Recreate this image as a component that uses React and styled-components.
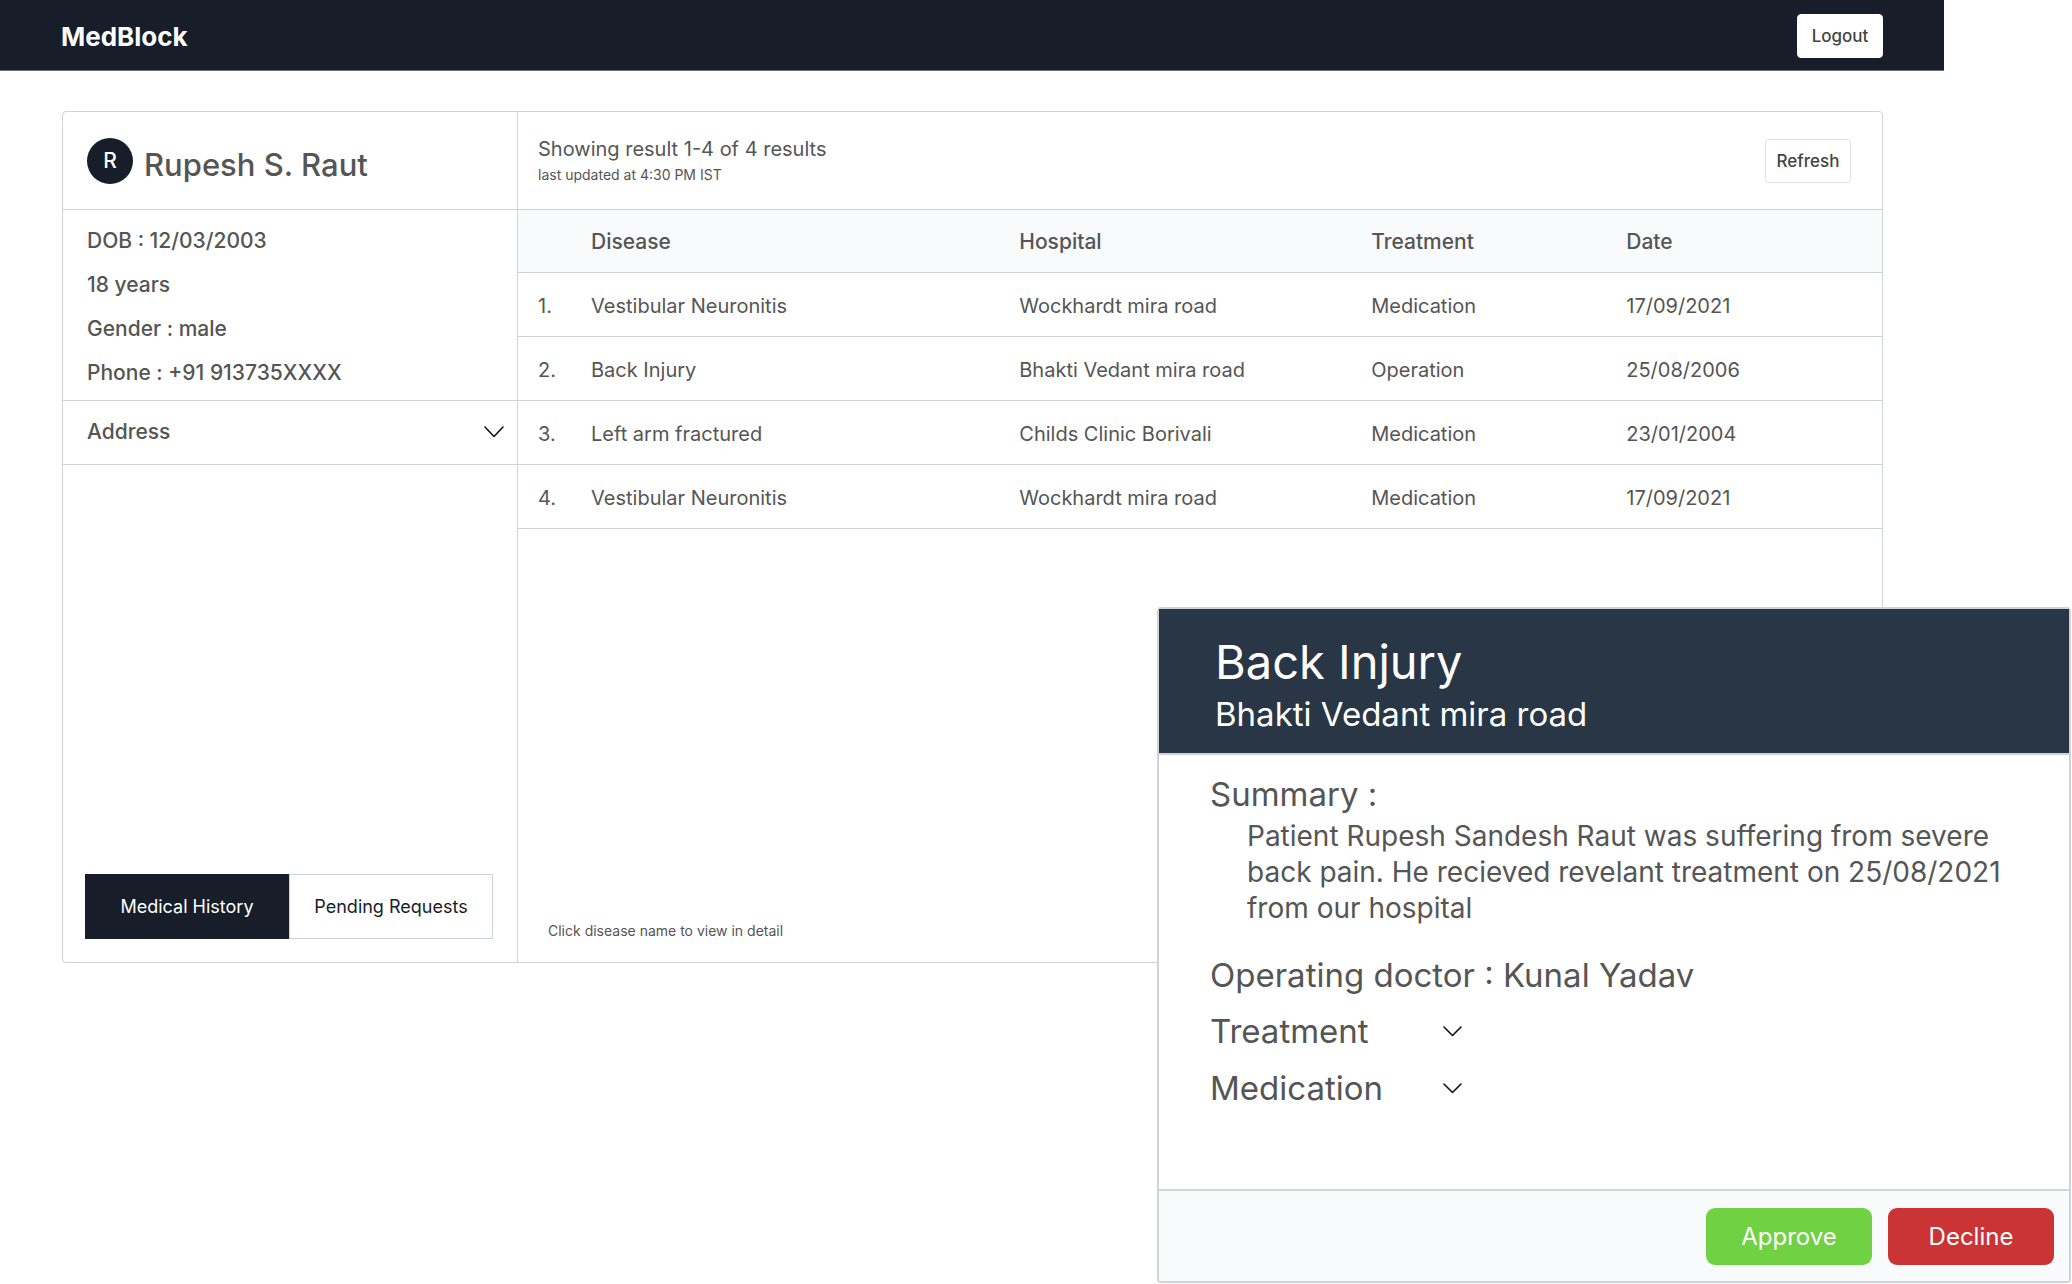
import React, { useState } from "react";
import styled, { createGlobalStyle } from "styled-components";

const color = {
  navy: "#171e29",
  slate: "#283646",
  text: "#555555",
  line: "#cfd3d7",
  tint: "#f9fafc",
};

const GlobalStyle = createGlobalStyle`
  *, *::before, *::after { box-sizing: border-box; }
  body {
    margin: 0;
    background: #ffffff;
    color: ${color.text};
    font-family: Inter, "Liberation Sans", sans-serif;
    font-size: 20px;
  }
  h1, h2, h3, p, ul { margin: 0; padding: 0; font-weight: 400; }
  button { font-family: inherit; color: inherit; cursor: pointer; }
`;

const Page = styled.div`
  position: relative;
  min-height: 100vh;
  display: flex;
  flex-direction: column;
  padding: 0 128px 321px 0;
`;

const TopBar = styled.header`
  display: flex;
  align-items: center;
  justify-content: space-between;
  height: 71px;
  padding: 2px 61px 0;
  background: ${color.navy};
  border-bottom: 1px solid #6d727b;
`;

const Brand = styled.h1`
  color: #ffffff;
  font-size: 26px;
  font-weight: 700;
`;

const SmallButton = styled.button`
  width: 86px;
  height: 44px;
  padding: 0;
  background: #ffffff;
  border: 1px solid ${(p) => (p.$outlined ? "#dfe1e4" : "#ffffff")};
  border-radius: 4px;
  color: #444444;
  font-size: 17px;
  font-weight: 500;
`;

const Card = styled.main`
  flex: 1;
  display: grid;
  grid-template-columns: 455px 1fr;
  margin: 40px 61px 0 62px;
  border: 1px solid ${color.line};
  border-radius: 4px;
`;

const Sidebar = styled.aside`
  display: flex;
  flex-direction: column;
  border-right: 1px solid ${color.line};
`;

const PanelHead = styled.div`
  display: flex;
  align-items: center;
  height: 98px;
  border-bottom: 1px solid ${color.line};
`;

const Identity = styled(PanelHead)`
  gap: 11px;
  padding-left: 24px;
`;

const Avatar = styled.span`
  display: grid;
  place-items: center;
  width: 46px;
  height: 46px;
  border-radius: 50%;
  background: ${color.navy};
  color: #ffffff;
  font-size: 21px;
  font-weight: 500;
`;

const PatientName = styled.h2`
  padding-top: 8px;
  font-size: 31px;
  font-weight: 500;
`;

const Facts = styled.ul`
  display: flex;
  flex-direction: column;
  height: 191px;
  padding: 9px 24px 0;
  border-bottom: 1px solid ${color.line};
  list-style: none;
  font-size: 21px;
  font-weight: 500;
  line-height: 44px;
`;

const AddressToggle = styled.button`
  display: flex;
  align-items: center;
  justify-content: space-between;
  height: 64px;
  padding: 0 13px 2px 24px;
  background: none;
  border: 0;
  border-bottom: 1px solid ${color.line};
  font-size: 21px;
  font-weight: 500;
`;

const Tabs = styled.div`
  display: grid;
  grid-template-columns: 1fr 1fr;
  margin: auto 24px 23px 22px;
`;

const Tab = styled.button`
  height: 65px;
  padding: 0;
  background: ${(p) => (p.$active ? color.navy : "#ffffff")};
  border: 1px solid ${(p) => (p.$active ? color.navy : color.line)};
  color: ${(p) => (p.$active ? "#ffffff" : color.navy)};
  font-size: 18px;
`;

const Results = styled.section`
  display: flex;
  flex-direction: column;
`;

const ResultsHead = styled(PanelHead)`
  justify-content: space-between;
  padding: 0 31px 0 20px;
`;

const ResultCount = styled.p`
  font-size: 20px;
  line-height: 28px;
`;

const Note = styled.p`
  font-size: 14px;
  line-height: 24px;
`;

const Hint = styled(Note)`
  margin: auto 0 19px 30px;
`;

const HistoryTable = styled.table`
  width: 100%;
  table-layout: fixed;
  border-collapse: separate;
  border-spacing: 0;
  text-align: left;
`;

const Col = styled.col`
  width: ${(p) => p.$width};
`;

const HeadCell = styled.th`
  height: 63px;
  padding: 0;
  background: ${color.tint};
  border-bottom: 1px solid ${color.line};
  font-size: 21px;
  font-weight: 500;
`;

const Cell = styled.td`
  height: 64px;
  padding: 2px 0 0 ${(p) => (p.$index ? "20px" : "0")};
  border-bottom: 1px solid ${color.line};
  font-size: 20px;
`;

const DiseaseLink = styled.button`
  padding: 0;
  background: none;
  border: 0;
  font-size: 20px;
`;

const Dialog = styled.section`
  position: absolute;
  right: 1px;
  bottom: 1px;
  width: min(914px, 100%);
  background: #ffffff;
  border: 2px solid ${color.line};
  border-radius: 4px;
`;

const DialogHead = styled.header`
  padding: 23px 56px 17px;
  background: ${color.slate};
  border-bottom: 2px solid ${color.line};
  color: #ffffff;
`;

const DialogTitle = styled.h2`
  font-size: 47px;
  line-height: 60px;
`;

const DialogSubtitle = styled.p`
  font-size: 33px;
  line-height: 44px;
`;

const DialogBody = styled.div`
  padding: 17px 51px 78px;
`;

const Field = styled.h3`
  font-size: 33px;
  line-height: 44px;
`;

const Summary = styled.p`
  padding: 2px 0 27px 37px;
  font-size: 28px;
  line-height: 36px;
`;

const Disclosure = styled.button`
  display: grid;
  grid-template-columns: 233px auto;
  align-items: center;
  padding: 12px 0 0;
  background: none;
  border: 0;
  text-align: left;
  font-size: 33px;
  line-height: 45px;
`;

const DialogFoot = styled.footer`
  display: flex;
  justify-content: flex-end;
  gap: 16px;
  padding: 17px 15px 16px;
  background: ${color.tint};
  border-top: 2px solid ${color.line};
`;

const ActionButton = styled.button`
  width: 166px;
  height: 57px;
  padding: 0;
  background: ${(p) => (p.$danger ? "#ca3434" : "#70d243")};
  border: 0;
  border-radius: 9px;
  color: #ffffff;
  font-size: 24px;
`;

function Chevron({ width, height }) {
  return (
    <svg width={width} height={height} viewBox={`0 0 ${width} ${height}`} fill="none" aria-hidden="true">
      <path
        d={`M1 1L${width / 2} ${height - 1.5}L${width - 1} 1`}
        stroke="#111111"
        strokeWidth="1.6"
        strokeLinecap="round"
        strokeLinejoin="round"
      />
    </svg>
  );
}

const facts = ["DOB : 12/03/2003", "18 years", "Gender : male", "Phone : +91 913735XXXX"];

const records = [
  ["Vestibular Neuronitis", "Wockhardt mira road", "Medication", "17/09/2021"],
  ["Back Injury", "Bhakti Vedant mira road", "Operation", "25/08/2006"],
  ["Left arm fractured", "Childs Clinic Borivali", "Medication", "23/01/2004"],
  ["Vestibular Neuronitis", "Wockhardt mira road", "Medication", "17/09/2021"],
];

const tabs = ["Medical History", "Pending Requests"];

export default function App() {
  const [tab, setTab] = useState(tabs[0]);

  return (
    <>
      <GlobalStyle />
      <Page>
        <TopBar>
          <Brand>MedBlock</Brand>
          <SmallButton type="button">Logout</SmallButton>
        </TopBar>

        <Card>
          <Sidebar>
            <Identity>
              <Avatar>R</Avatar>
              <PatientName>Rupesh S. Raut</PatientName>
            </Identity>
            <Facts>
              {facts.map((fact) => (
                <li key={fact}>{fact}</li>
              ))}
            </Facts>
            <AddressToggle type="button" aria-expanded="false">
              Address
              <Chevron width={20} height={12} />
            </AddressToggle>
            <Tabs>
              {tabs.map((name) => (
                <Tab key={name} type="button" $active={name === tab} onClick={() => setTab(name)}>
                  {name}
                </Tab>
              ))}
            </Tabs>
          </Sidebar>

          <Results>
            <ResultsHead>
              <div>
                <ResultCount>Showing result 1-4 of 4 results</ResultCount>
                <Note>last updated at 4:30 PM IST</Note>
              </div>
              <SmallButton type="button" $outlined>
                Refresh
              </SmallButton>
            </ResultsHead>
            <HistoryTable>
              <colgroup>
                <Col $width="73px" />
                <Col $width="31.4%" />
                <Col $width="25.8%" />
                <Col $width="18.7%" />
                <Col />
              </colgroup>
              <thead>
                <tr>
                  <HeadCell aria-label="Number" />
                  <HeadCell scope="col">Disease</HeadCell>
                  <HeadCell scope="col">Hospital</HeadCell>
                  <HeadCell scope="col">Treatment</HeadCell>
                  <HeadCell scope="col">Date</HeadCell>
                </tr>
              </thead>
              <tbody>
                {records.map(([disease, hospital, treatment, date], i) => (
                  <tr key={i}>
                    <Cell $index>{i + 1}.</Cell>
                    <Cell>
                      <DiseaseLink type="button">{disease}</DiseaseLink>
                    </Cell>
                    <Cell>{hospital}</Cell>
                    <Cell>{treatment}</Cell>
                    <Cell>{date}</Cell>
                  </tr>
                ))}
              </tbody>
            </HistoryTable>
            <Hint>Click disease name to view in detail</Hint>
          </Results>
        </Card>

        <Dialog role="dialog" aria-labelledby="record-title">
          <DialogHead>
            <DialogTitle id="record-title">Back Injury</DialogTitle>
            <DialogSubtitle>Bhakti Vedant mira road</DialogSubtitle>
          </DialogHead>
          <DialogBody>
            <Field>Summary :</Field>
            <Summary>
              Patient Rupesh Sandesh Raut was suffering from severe back pain. He recieved revelant
              treatment on 25/08/2021 from our hospital
            </Summary>
            <Field>Operating doctor : Kunal Yadav</Field>
            <Disclosure type="button" aria-expanded="false">
              Treatment
              <Chevron width={19} height={11} />
            </Disclosure>
            <Disclosure type="button" aria-expanded="false">
              Medication
              <Chevron width={19} height={11} />
            </Disclosure>
          </DialogBody>
          <DialogFoot>
            <ActionButton type="button">Approve</ActionButton>
            <ActionButton type="button" $danger>
              Decline
            </ActionButton>
          </DialogFoot>
        </Dialog>
      </Page>
    </>
  );
}
